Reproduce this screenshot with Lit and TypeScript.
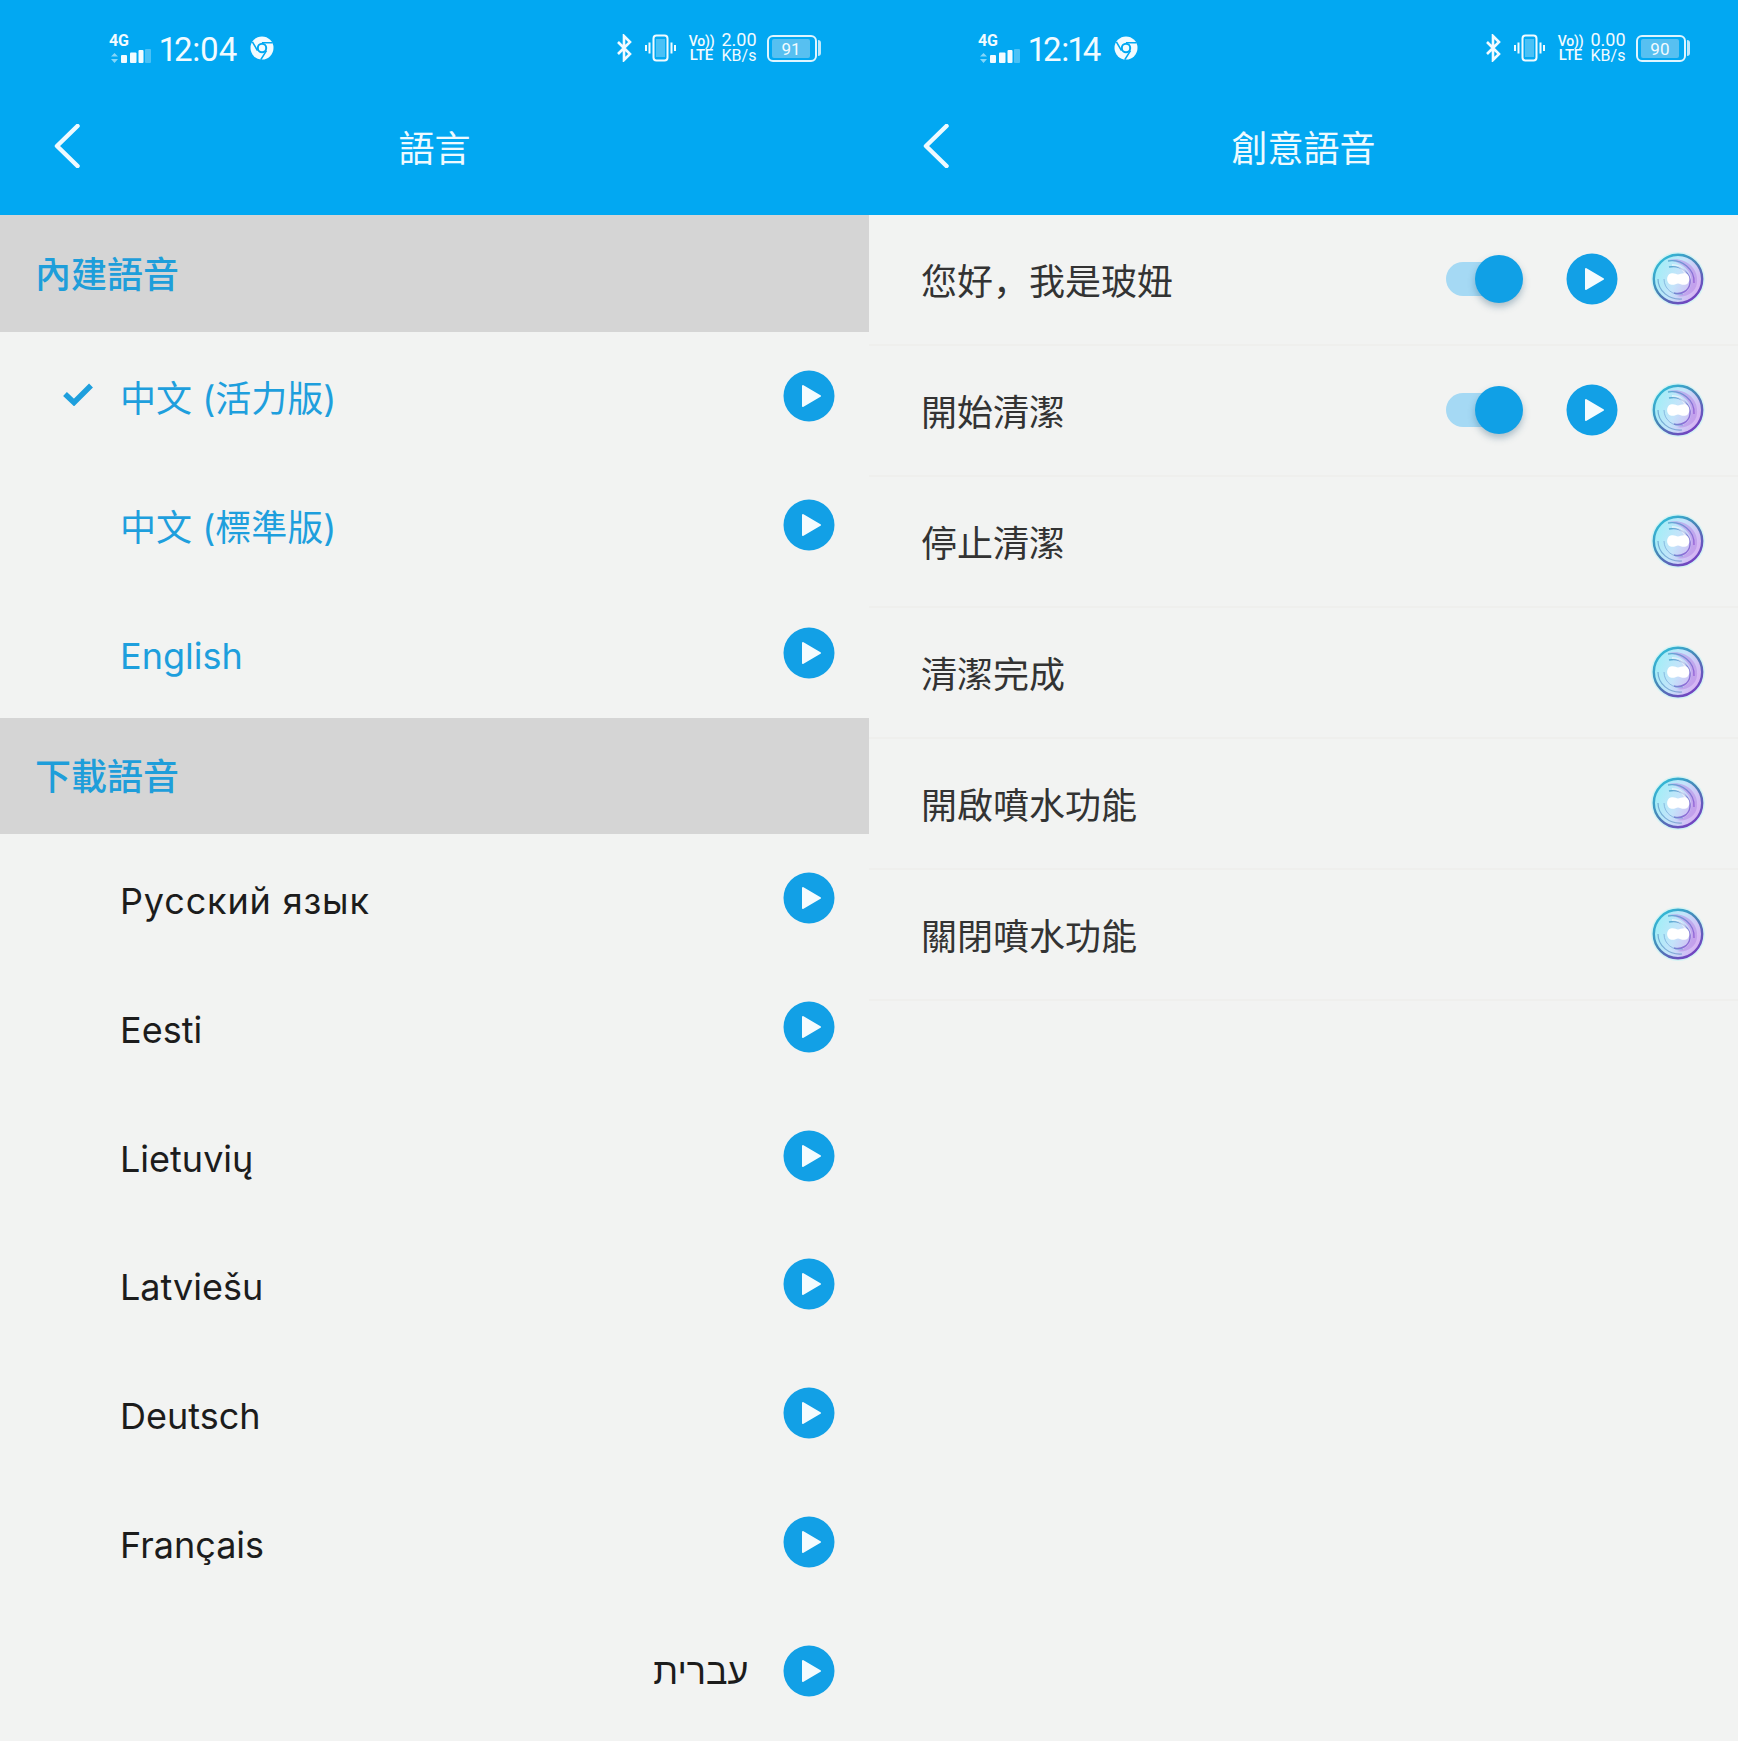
import { LitElement, html, css } from "lit";
import { customElement, property } from "lit/decorators.js";

const playIcon = html`<svg class="play" viewBox="0 0 52 52" width="52" height="52">
  <circle cx="26" cy="26" r="25.5" fill="#12a0e6"/>
  <path d="M20 16 L37 26 L20 36 Z" fill="#f4fbfe" stroke="#f4fbfe" stroke-width="2" stroke-linejoin="round"/>
</svg>`;

let uid = 0;
const voiceIcon = () => {
  const id = `v${uid++}`;
  return html`<svg class="voice" viewBox="0 0 52 52" width="52" height="52">
  <defs>
    <linearGradient id="${id}r" x1="0.1" y1="0" x2="0.9" y2="1">
      <stop offset="0" stop-color="#2fc4dc"/><stop offset=".5" stop-color="#4a7fb4"/><stop offset="1" stop-color="#7c35c4"/>
    </linearGradient>
    <linearGradient id="${id}f" x1="0" y1="0.2" x2="1" y2=".6">
      <stop offset="0" stop-color="#9cf0f6"/><stop offset=".5" stop-color="#c4e4fa"/><stop offset="1" stop-color="#d8aef2"/>
    </linearGradient>
    <linearGradient id="${id}s" x1="0" y1="0" x2="1" y2="1">
      <stop offset="0" stop-color="#4aa6cc"/><stop offset="1" stop-color="#8a4fd0"/>
    </linearGradient>
  </defs>
  <circle cx="26" cy="26" r="27" fill="#9ff4fa" opacity=".35"/>
  <circle cx="26" cy="26" r="24.2" fill="url(#${id}f)" stroke="url(#${id}r)" stroke-width="2.4"/>
  <path d="M16 7 C32 3 47 14 45 30 C44 39 34 45 25 43 C34 41 39 36 39.5 28 C40 18 30 9 16 7 Z" fill="#b78ae6" opacity=".55"/>
  <path d="M16 8 C30 6 43 16 42 30" fill="none" stroke="url(#${id}s)" stroke-width="1.3" opacity=".8"/>
  <path d="M17 14 C29 11 39 21 38 30 C37 38 29 42 22 40" fill="none" stroke="url(#${id}s)" stroke-width="1.5" opacity=".85"/>
  <path d="M6 26 C6 38 17 47 30 46" fill="none" stroke="#4f86be" stroke-width="1.2" opacity=".6"/>
  <path d="M12 26 C12 36 21 43 31 41" fill="none" stroke="#5f93cc" stroke-width="1" opacity=".55"/>
  <path d="M20 12 C30 12 37 21 34 31" fill="none" stroke="#fff" stroke-width="2.2" opacity=".55"/>
  <path d="M18.5 20.5 C22 19.5 24 21 26 21.5 C28 21 31 19.5 34 20.5 C38.5 22 38.5 30 34 31.5 C31 32.5 28 31 26 30.5 C24 31 21.5 32.5 18.5 31.5 C14 30 14 22 18.5 20.5 Z" fill="#fff"/>
</svg>`;
};

const chrome = html`<svg class="chrome" viewBox="0 0 24 24" width="24" height="24">
  <circle cx="12" cy="12" r="11.5" fill="#f2fbff"/>
  <circle cx="12" cy="12" r="5.2" fill="#02a8f2"/>
  <circle cx="12" cy="12" r="3.2" fill="#f2fbff"/>
  <path d="M12 6.8 H22.5 M7.5 14.6 L2.4 5.8 M16.5 14.6 L10.8 23.6" stroke="#02a8f2" stroke-width="1.6" fill="none"/>
</svg>`;

const bluetooth = html`<svg viewBox="0 0 16 28" width="16" height="28">
  <path d="M2 8 L14 20 L8 26 V2 L14 8 L2 20" fill="none" stroke="#f2fbff" stroke-width="2.6"/>
</svg>`;

const vibrate = html`<svg viewBox="0 0 32 28" width="33" height="28" fill="none" stroke="#f2fbff">
  <rect x="9" y="1.5" width="14" height="25" rx="3" stroke-width="2"/>
  <rect x="11.5" y="5" width="9" height="18" fill="#f2fbff" opacity=".3" stroke="none"/>
  <path d="M5 8.5 V19.5 M1.5 11 V17 M27 8.5 V19.5 M30.5 11 V17" stroke-width="2"/>
</svg>`;

const signal = html`<svg class="sig" viewBox="0 0 42 15" width="42" height="15">
  <path d="M5.5 5 L9 8.5 H2 Z" fill="#f2fbff" opacity=".55"/>
  <path d="M5.5 15 L9 11 H2 Z" fill="#f2fbff" opacity=".55"/>
  <rect x="12" y="7" width="6" height="8" rx="1" fill="#f2fbff"/>
  <rect x="21" y="4.5" width="6.5" height="10.5" rx="1" fill="#f2fbff"/>
  <rect x="29.5" y="2" width="5" height="13" rx="1" fill="#f2fbff"/>
  <rect x="36" y="1" width="6" height="14" rx="1" fill="#f2fbff" opacity=".3"/>
</svg>`;

@customElement("status-bar")
class StatusBar extends LitElement {
  @property() time = "";
  @property() speed = "";
  @property() battery = "";
  static styles = css`
    :host { display: flex; align-items: center; height: 96px; padding: 0 48px 0 109px; box-sizing: border-box; color: #f2fbff; font-family: Roboto, sans-serif; }
    .net { display: flex; flex-direction: column; width: 42px; margin-right: 9px; }
    .g4 { font-size: 16px; line-height: 13px; font-weight: 700; height: 14px; letter-spacing: -.3px; }
    .sig { display: block; }
    .time { font-size: 33px; line-height: 44px; font-weight: 400; margin-right: 13px; letter-spacing: -.35px; padding-top: 3px; font-variant-numeric: proportional-nums; }
    .chrome { display: block; }
    .spacer { flex: 1; }
    .right { display: flex; align-items: center; }
    .bt { margin-right: 12px; display: flex; }
    .vib { margin-right: 11px; display: flex; }
    .vo { display: flex; flex-direction: column; font-size: 14px; line-height: 14px; width: 27px; margin-right: 6px; font-weight: 500; text-align: center; letter-spacing: -.2px; }
    .vo .lte { font-size: 15px; }
    .sp { display: flex; flex-direction: column; font-size: 18px; line-height: 16px; width: 36px; margin-right: 10px; align-items: center; white-space: nowrap; }
    .sp .u { font-size: 16px; }
    .bat { display: flex; align-items: center; }
    .cell { width: 50px; height: 27px; border: 2px solid #dff5ff; border-radius: 6px; box-sizing: border-box; padding: 2px 1px 2px 3px; }
    .fill { height: 100%; background: #57c0f1; border-radius: 2px; font-size: 17px; line-height: 20px; text-align: center; }
    .nub { width: 3px; height: 16px; background: #bfe9fc; border-radius: 0 3px 3px 0; margin-left: 1px; }
  `;
  render() {
    return html`
      <div class="net"><span class="g4">4G</span>${signal}</div>
      <span class="time">${this.time}</span>
      ${chrome}
      <span class="spacer"></span>
      <div class="right">
        <span class="bt">${bluetooth}</span>
        <span class="vib">${vibrate}</span>
        <div class="vo"><span>Vo))</span><span class="lte">LTE</span></div>
        <div class="sp"><span>${this.speed}</span><span class="u">KB/s</span></div>
        <div class="bat"><div class="cell"><div class="fill" style="width:${this.battery}%">${this.battery}</div></div><span class="nub"></span></div>
      </div>`;
  }
}

const FONT = css`Inter, "Noto Sans CJK TC", sans-serif`;

@customElement("app-bar")
class AppBar extends LitElement {
  @property() time = "";
  @property() speed = "";
  @property() battery = "";
  @property() heading = "";
  static styles = css`
    :host { display: block; background: #02a8f2; height: 215px; }
    .nav { display: grid; grid-template-columns: 1fr auto 1fr; align-items: center; height: 100px; }
    .nav svg { display: block; margin-left: 54px; }
    .t { color: #eefaff; font: 400 36px/50px ${FONT}; padding-top: 6px; }
  `;
  render() {
    return html`
      <status-bar .time=${this.time} .speed=${this.speed} .battery=${this.battery}></status-bar>
      <div class="nav">
        <svg viewBox="0 0 26 44" width="26" height="44"><path d="M23.5 2 L3 22 L23.5 42" fill="none" stroke="#eefaff" stroke-width="4.5" stroke-linecap="round" stroke-linejoin="round"/></svg>
        <span class="t">${this.heading}</span>
        <span></span>
      </div>`;
  }
}

@customElement("app-root")
export class AppRoot extends LitElement {
  static styles = css`
    :host { display: grid; grid-template-columns: 869px 869px; width: 1738px; height: 1741px; background: #f2f3f2; overflow: hidden; font-family: ${FONT}; }
    .panel { display: flex; flex-direction: column; min-width: 0; }
    .section { height: 116.5px; background: #d5d5d5; color: #1e9eda; font-size: 36px; font-weight: 500; line-height: 50px; display: flex; align-items: center; padding-left: 35px; padding-top: 3px; box-sizing: border-box; }
    .lang { height: 128.7px; display: flex; align-items: center; padding-right: 34.5px; font-size: 36px; color: #1c1c1c; flex: none; box-sizing: border-box; }
    .lang.blue { color: #1e9fdd; }
    .mark { width: 120px; flex: none; display: flex; justify-content: flex-end; padding-right: 26px; box-sizing: border-box; }
    .mark svg { display: block; transform: translateY(-2px); }
    .name { flex: 1; white-space: nowrap; }
    .name.latin { padding-top: 6px; }
    .name.ru { letter-spacing: .85px; }
    .name.rtl { text-align: right; margin-right: 34px; font-family: "Liberation Sans", sans-serif; padding-top: 2px; }
    .comma { font-family: "Noto Sans CJK SC", sans-serif; }
    .lang svg.play { flex: none; }
    .voice-row { height: 131px; display: flex; align-items: center; padding: 0 34px 2px 52px; box-sizing: border-box; border-bottom: 2px solid #efefed; font-size: 36px; color: #333; flex: none; }
    .toggle { position: relative; width: 77px; height: 34px; margin-right: 43px; flex: none; }
    .track { display: block; width: 55px; height: 34px; background: #a5d9f4; border-radius: 17px; }
    .knob { position: absolute; right: 0; top: -7px; width: 48px; height: 48px; border-radius: 50%; background: #10a0e6; box-shadow: 0 4px 7px rgba(40, 90, 120, .35); }
    .voice-row svg.play { margin-right: 34px; flex: none; }
    .voice { flex: none; overflow: visible; }
  `;
  render() {
    const dl = ["Eesti", "Lietuvių", "Latviešu", "Deutsch", "Français"];
    const voices = [html`您好<span class="comma">，</span>我是玻妞`, "開始清潔", "停止清潔", "清潔完成", "開啟噴水功能", "關閉噴水功能"];
    return html`
      <div class="panel">
        <app-bar heading="語言" time="12:04" speed="2.00" battery="91"></app-bar>
        <div class="section">內建語音</div>
        <div class="lang blue">
          <span class="mark"><svg viewBox="0 0 32 24" width="32" height="24"><path d="M3 12 L12 20.5 L29 3.5" fill="none" stroke="#1e9fdd" stroke-width="5.5"/></svg></span>
          <span class="name">中文 (活力版)</span>${playIcon}</div>
        <div class="lang blue"><span class="mark"></span><span class="name">中文 (標準版)</span>${playIcon}</div>
        <div class="lang blue"><span class="mark"></span><span class="name latin">English</span>${playIcon}</div>
        <div class="section">下載語音</div>
        <div class="lang"><span class="mark"></span><span class="name latin ru">Русский язык</span>${playIcon}</div>
        ${dl.map((n) => html`<div class="lang"><span class="mark"></span><span class="name latin">${n}</span>${playIcon}</div>`)}
        <div class="lang"><span class="name rtl" dir="rtl" lang="he">עברית</span>${playIcon}</div>
      </div>
      <div class="panel">
        <app-bar heading="創意語音" time="12:14" speed="0.00" battery="90"></app-bar>
        ${voices.map((n, i) => html`<div class="voice-row">
          <span class="name">${n}</span>
          ${i < 2 ? html`<span class="toggle"><span class="track"></span><span class="knob"></span></span>${playIcon}` : ""}
          ${voiceIcon()}
        </div>`)}
      </div>`;
  }
}
void StatusBar; void AppBar;
